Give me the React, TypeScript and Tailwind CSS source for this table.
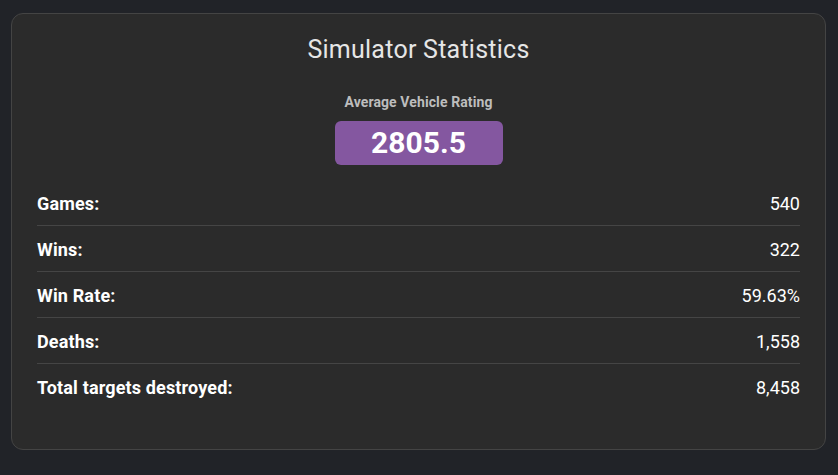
const stats = [
  { label: 'Games:', value: '540' },
  { label: 'Wins:', value: '322' },
  { label: 'Win Rate:', value: '59.63%' },
  { label: 'Deaths:', value: '1,558' },
  { label: 'Total targets destroyed:', value: '8,458' }
]

export default function App (): JSX.Element {
  return (
    <div className="min-h-[475px] bg-[#212328] pl-[11px] pr-[12px] pt-[13px] font-['Roboto',sans-serif]">
      <div className="rounded-xl border border-[#444444] bg-[#2b2b2b] px-[25px] pt-[21px] pb-[39px]">
        <h2 className="text-center text-[25px] leading-[30px] text-[#e6e6e6] tracking-[0.25px]">Simulator Statistics</h2>

        <div className="mt-[28px] flex flex-col items-center">
          <div className="text-[14px] font-bold leading-[18px] text-[#bdbdbd] tracking-[0.1px]">Average Vehicle Rating</div>
          <div className="mt-[10px] flex h-[44px] w-[168px] items-center justify-center rounded-md bg-[#8457a0]">
            <span className="text-[30px] font-bold leading-none text-white">2805.5</span>
          </div>
        </div>

        <div className="mt-[15px]">
          {stats.map((s, i) => (
            <div
              key={s.label}
              className={`flex items-center justify-between pt-[12px] pb-[9px] text-[18px] leading-[24px] text-white ${i < stats.length - 1 ? 'border-b border-[#454545]' : 'pb-[10px]'}`}
            >
              <span className="font-bold tracking-[0.15px]">{s.label}</span>
              <span>{s.value}</span>
            </div>
          ))}
        </div>
      </div>
    </div>
  )
}
